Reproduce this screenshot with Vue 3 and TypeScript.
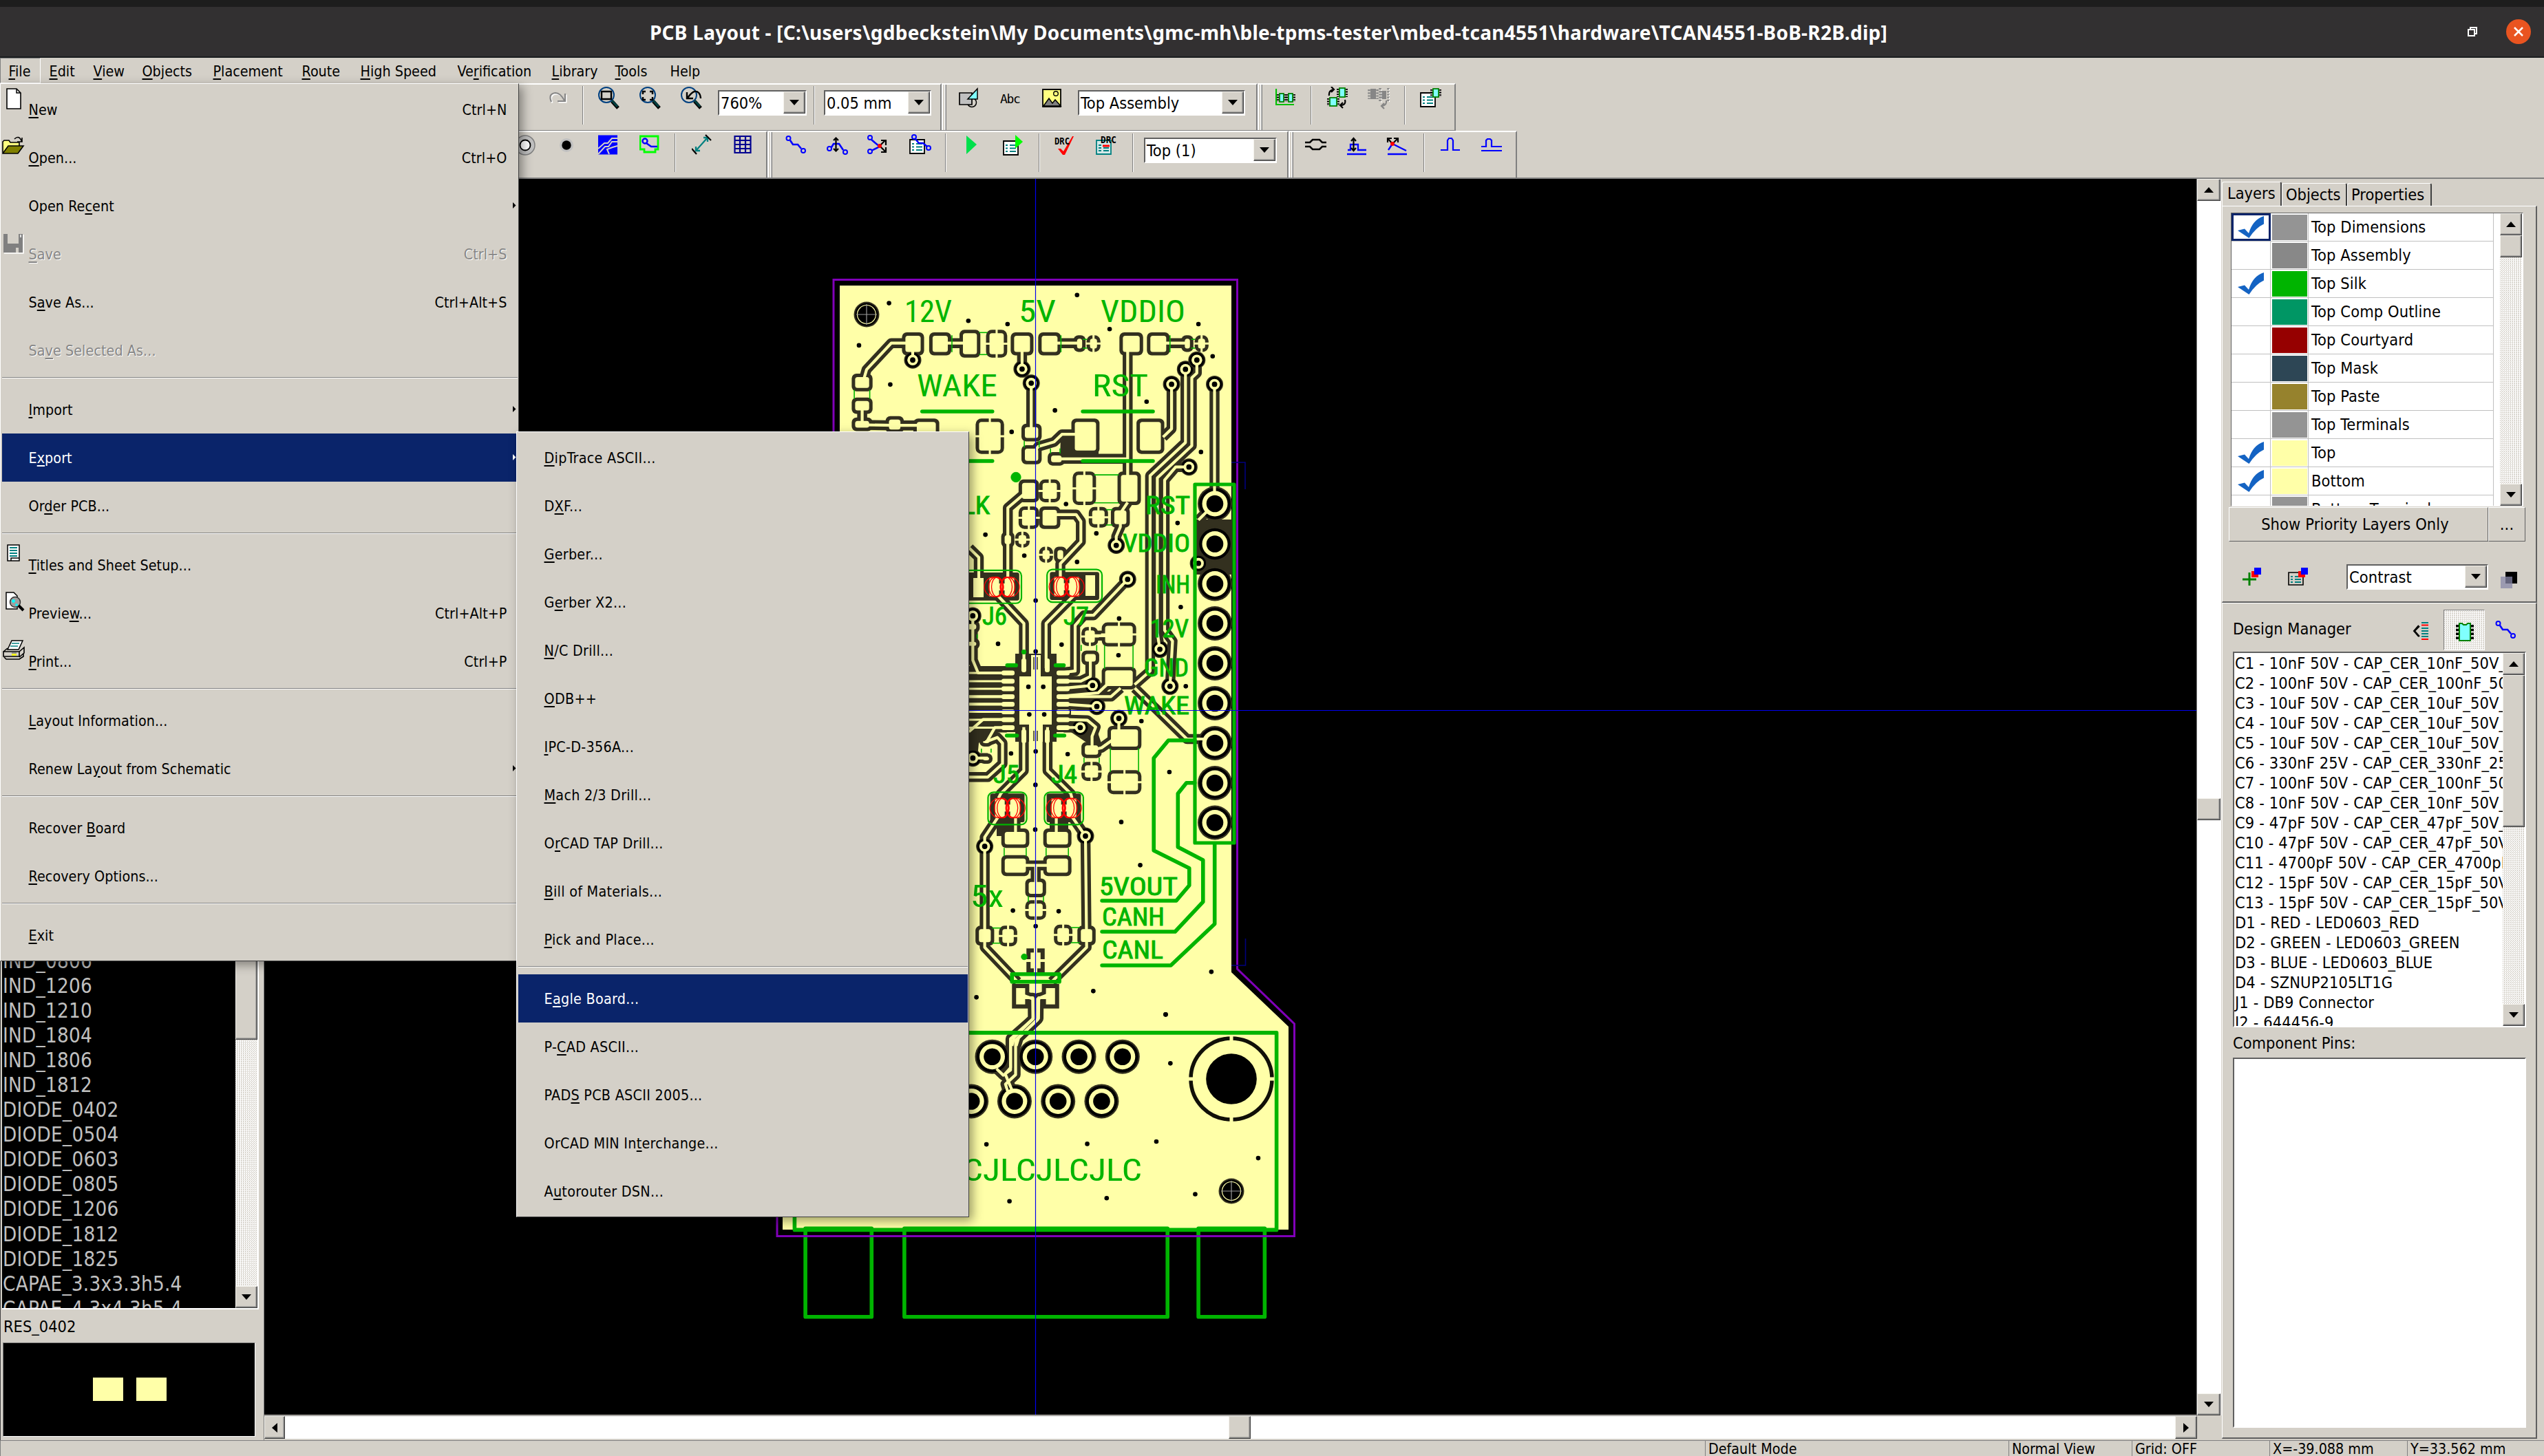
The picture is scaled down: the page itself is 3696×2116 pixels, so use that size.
<script setup lang="ts">
type MenuItem = { label?: string; keys?: string; sub?: boolean; off?: boolean; on?: boolean; icon?: string }
type Tool = { x: number; icon?: string; sep?: boolean; combo?: string; w?: number }
type Group = { from: number; to: number; tools: Tool[] }
type Grid = (s: string) => number[][]

const menuBar = [
  { t: '&File', w: 59 }, { t: '&Edit', w: 64 }, { t: '&View', w: 71 }, { t: '&Objects', w: 103 }, { t: '&Placement', w: 129 },
  { t: '&Route', w: 85 }, { t: '&High Speed', w: 141 }, { t: 'Ve&rification', w: 137 }, { t: '&Library', w: 92 }, { t: '&Tools', w: 80 }, { t: 'Help', w: 70 },
]

const fileMenu: MenuItem[] = [
  { label: '&New', keys: 'Ctrl+N', icon: 'new' }, { label: '&Open...', keys: 'Ctrl+O', icon: 'open' }, { label: 'Open Re&cent', sub: true },
  { label: '&Save', keys: 'Ctrl+S', off: true, icon: 'save' }, { label: 'S&ave As...', keys: 'Ctrl+Alt+S' }, { label: 'Sa&ve Selected As...', off: true }, {},
  { label: '&Import', sub: true }, { label: 'E&xport', sub: true, on: true }, { label: 'Or&der PCB...' }, {},
  { label: '&Titles and Sheet Setup...', icon: 'titles' }, { label: 'Previe&w...', keys: 'Ctrl+Alt+P', icon: 'preview' }, { label: '&Print...', keys: 'Ctrl+P', icon: 'print' }, {},
  { label: '&Layout Information...' }, { label: 'Renew La&yout from Schematic', sub: true }, {},
  { label: 'Recover &Board' }, { label: '&Recovery Options...' }, {}, { label: '&Exit' },
]

const exportMenu: MenuItem[] = [
  { label: '&DipTrace ASCII...' }, { label: 'D&XF...' }, { label: '&Gerber...' }, { label: 'G&erber X2...' }, { label: '&N/C Drill...' },
  { label: '&ODB++' }, { label: '&IPC-D-356A...' }, { label: '&Mach 2/3 Drill...' }, { label: 'O&rCAD TAP Drill...' }, { label: '&Bill of Materials...' },
  { label: '&Pick and Place...' }, {}, { label: 'E&agle Board...', on: true }, { label: 'P-&CAD ASCII...' }, { label: 'PAD&S PCB ASCII 2005...' },
  { label: 'OrCAD MIN In&terchange...' }, { label: 'A&utorouter DSN...' },
]

/* Splits "E&xport" into text before, the accelerator letter, and text after. */
function parts(s: string): string[] {
  const i = s.indexOf('&')
  return i < 0 ? [s, '', ''] : [s.slice(0, i), s[i + 1], s.slice(i + 2)]
}

const glass = '<ellipse cx="13" cy="12" rx="11" ry="11" fill="none" stroke="#004080" stroke-width="2"/><path d="M21 21L30 31" stroke="#000" stroke-width="5"/><path d="M21 20L29 29" stroke="#004040" stroke-width="3"/>'
const sheet = (x: number, y: number, c = '#000') => `<path d="M${x} ${y}h21v20h-21z" fill="#fff" stroke="${c}" stroke-width="1.8"/><path d="M${x + 3} ${y + 6}h3m3 0h9M${x + 3} ${y + 10.5}h3m3 0h9M${x + 3} ${y + 15}h3m3 0h9" stroke="#008080" stroke-width="1.8"/>`
const chip = (x: number, y: number, w = 8, h = 13) => `<path d="M${x - 2.5} ${y + 1}v${h - 1}M${x + w + 2.5} ${y + 1}v${h - 1}" stroke="#000" stroke-width="3" stroke-dasharray="1.8 1.8"/><rect x="${x}" y="${y}" width="${w}" height="${h}" fill="#80ffff" stroke="#008000" stroke-width="1.8"/>`

const icons: Record<string, string> = {
  new: '<path d="M7 1h14l6 6v23H7z" fill="#fff" stroke="#000" stroke-width="1.6"/><path d="M21 1v6h6" fill="none" stroke="#000" stroke-width="1.5"/>',
  open: '<path d="M1 24V8l2-2h7l2 3h13v5" fill="#ffff80" stroke="#000" stroke-width="1.6"/><path d="M1 25L9 14h22l-8 11z" fill="#808000" stroke="#000" stroke-width="1.6"/><path d="M18 4q6-6 10 2v2m-6 0h7v-6" fill="none" stroke="#000" stroke-width="1.6"/>',
  save: '<path d="M2 2h28v27H2z" fill="#808080"/><path d="M8 2h16v14H8z" fill="#d4d0c8"/><path d="M20 22h4v7h-4z" fill="#d4d0c8"/><path d="M27 3v4M3 30h28V3" stroke="#fff" stroke-width="1.5" fill="none"/>',
  titles: '<path d="M8 2h17v23H8z" fill="#fff" stroke="#000" stroke-width="1.5"/><path d="M11 6h11M11 10h11M11 14h11M11 18h11" stroke="#008080" stroke-width="2"/><path d="M13 25v-4h12" fill="none" stroke="#000" stroke-width="1.5"/>',
  preview: '<path d="M6 1h11l5 5v19H6z" fill="#fff" stroke="#000" stroke-width="1.5"/><circle cx="19" cy="15" r="7.5" fill="#a0a0a0" stroke="#333" stroke-width="1.5"/><circle cx="16.5" cy="13.5" r="2.4" fill="#0ff"/><circle cx="21" cy="19" r="1.8" fill="#0ff"/><path d="M24 20l7 7" stroke="#000" stroke-width="4"/>',
  print: '<path d="M8 14L14 1h16l-6 13z" fill="#fff" stroke="#000" stroke-width="1.5"/><path d="M14 5h11M12 9h11" stroke="#008080" stroke-width="1.6"/><path d="M2 17l6-5M2 17h23v7H2zM25 17l7-6v8l-7 6" fill="#d4d0c8" stroke="#000" stroke-width="1.6"/><path d="M3 25l3 3h19l6-4v-4" fill="none" stroke="#000" stroke-width="1.6"/><path d="M14 21.5h7" stroke="#ff0" stroke-width="2.4"/><path d="M14 19h7" stroke="#808080" stroke-width="1.5"/>',
  redo: '<path d="M4 22Q-1 10 10 9q7 0 13 11M13 21h11V10" fill="none" stroke="#fff" stroke-width="2.2" transform="translate(1.5 1.5)"/><path d="M4 22Q-1 10 10 9q7 0 13 11M13 21h11V10" fill="none" stroke="#868686" stroke-width="2.2"/>',
  zoomRect: glass + '<path d="M6 7h14v11H6z" fill="none" stroke="#000" stroke-width="2.4"/>',
  zoomAll: glass + '<path d="M6 11V7h4m6 0h4v4m0 4v4h-4m-6 0H6v-4" fill="none" stroke="#000" stroke-width="2.4"/>',
  zoomPrev: glass + '<path d="M30 17q-1-11-9-10-4 1-10 9M10 8v9h9" fill="none" stroke="#000" stroke-width="2.4"/>',
  shapes: '<circle cx="19" cy="23" r="6.5" fill="#d4d0c8" stroke="#000" stroke-width="1.5"/><path d="M1 9h18v17H1z" fill="#c0c0c0" stroke="#000" stroke-width="1.7"/><path d="M27 3v15H13z" fill="#80ffff" stroke="#000" stroke-width="1.5"/>',
  image: '<path d="M1 4h26v25H1z" fill="#ffff80" stroke="#000" stroke-width="1.8"/><path d="M2 28l8-11 5 7 4-5 8 9z" fill="#808080" stroke="#000" stroke-width="1.5"/><circle cx="20" cy="10" r="3.3" fill="none" stroke="#000" stroke-width="1.4"/>',
  align: '<path d="M1 3v23h26" fill="none" stroke="#00c000" stroke-width="2.2"/>' + chip(6, 10, 6, 12) + chip(19, 10, 6, 12),
  swap: chip(18, 2, 8, 13) + chip(4, 16, 10, 12) + '<path d="M3 13q-1-8 7-9m-4-4l4 4-4 4M26 19q2 8-7 8m4-4l-4 4 4 4" fill="none" stroke="#000" stroke-width="2.2"/>',
  swapOff: '<path d="M4 3h8v15H4zM19 6h8v12h-8z" fill="#868686"/><path d="M2 4v14M14 4v14M18 2v20M30 2v20" stroke="#868686" stroke-width="3.5" stroke-dasharray="2.2 2"/><path d="M31.500 3v20M20 4v20" stroke="#fff" stroke-width="1.2" stroke-dasharray="2.2 2"/><path d="M27 20q1 7-6 8m3-4l-4 4 4 4" fill="none" stroke="#868686" stroke-width="2.2"/>',
  compList: sheet(1, 9) + chip(19, 3, 8, 12),
  pad: '<circle cx="14" cy="16" r="14" fill="#c0c0c0" stroke="#808080" stroke-width="1.5"/><circle cx="14" cy="16" r="7.5" fill="#fff" stroke="#000" stroke-width="1.8"/>',
  dot: '<circle cx="12" cy="16" r="10" fill="#c0c0c0"/><circle cx="12" cy="16" r="6.7"/>',
  routes: '<path d="M0 1.500h28v28H0z" fill="#00f"/><path d="M0 21l9-8h5l6-7h8M0 29l10-11h5l5-7h8M16 29l-3-7 8-3 7-2" fill="none" stroke="#d4d0c8" stroke-width="2"/>',
  area: '<path d="M1 3h26v19h-4v4H7v-4H1z" fill="#d4d0c8" stroke="#0f0" stroke-width="2.8"/><circle cx="8" cy="10" r="3.5" fill="none" stroke="#00f" stroke-width="2.4"/><path d="M10 13l7 5h9" fill="none" stroke="#00f" stroke-width="2.6"/>',
  measure: '<path d="M6 24L22 6M6 18v6h6M17 5h6v6" fill="none" stroke="#008080" stroke-width="2.3"/><path d="M0 21l7 8M20 1l8 8" stroke="#000" stroke-width="2.2"/>',
  table: '<path d="M1.500 3h23v24h-23zM1.500 9h23M1.500 15h23M1.500 21h23M9 3v24M17 3v24" fill="none" stroke="#000090" stroke-width="2.2"/>',
  track: '<path d="M7 9l4 6h7l5 6" fill="none" stroke="#00f" stroke-width="2.6"/><circle cx="4.5" cy="6" r="3" fill="none" stroke="#00f" stroke-width="2"/><circle cx="26" cy="24" r="3" fill="none" stroke="#00f" stroke-width="2"/>',
  trackMove: '<path d="M7 19l3-5h8l6 9" fill="none" stroke="#00f" stroke-width="2.6"/><circle cx="4" cy="21" r="3" fill="none" stroke="#00f" stroke-width="2"/><circle cx="27" cy="26" r="3" fill="none" stroke="#00f" stroke-width="2"/><path d="M13.5 6v18M10 9l3.5-3.5L17 9M10 21l3.5 3.5L17 21" fill="none" stroke="#000" stroke-width="2.2"/>',
  trackFree: '<path d="M6 8l12 10L6 24" fill="none" stroke="#00f" stroke-width="2.5"/><circle cx="4" cy="5" r="3" fill="none" stroke="#00f" stroke-width="2"/><circle cx="4" cy="25" r="3" fill="none" stroke="#00f" stroke-width="2"/><path d="M18 17l8-8m-6 0h7v7M18 17l8 8m-6 1h7v-7" fill="none" stroke="#000" stroke-width="2.2"/><circle cx="18" cy="17" r="3" fill="red"/>',
  netList: sheet(1, 8) + '<path d="M8 6l6 7h6l6 5" fill="none" stroke="#00f" stroke-width="2.5"/><circle cx="7" cy="4" r="3" fill="none" stroke="#00f" stroke-width="2"/><circle cx="28" cy="20" r="3" fill="none" stroke="#00f" stroke-width="2"/>',
  play: '<path d="M0 2l15 13L0 29z" fill="#00e04c"/>',
  playList: sheet(1, 10) + '<path d="M18 1l11 10-11 10z" fill="#0f0"/>',
  drc: '<path d="M5 21h4l4 4L26 3h2L15 30h-3z" fill="red"/><text x="0" y="15" font-family="DejaVu Sans Mono" font-size="14" font-weight="bold" textLength="22" lengthAdjust="spacingAndGlyphs">DRC</text>',
  drcList: '<path d="M1 9h21v20H1z" fill="#d4e8e8" stroke="#008080" stroke-width="1.8"/><path d="M4 16h4M4 20h4m3 0h8M4 24h4m3 0h8" stroke="#008080" stroke-width="1.8"/><path d="M10 17h10" stroke="red" stroke-width="3"/><text x="7" y="13" font-family="DejaVu Sans Mono" font-size="14" font-weight="bold" textLength="23" lengthAdjust="spacingAndGlyphs">DRC</text>',
  pair: '<path d="M0 12h7l4-4h10l4 4h6M0 18h7l4 4h10l4-4h6" fill="none" stroke="#000" stroke-width="2.5"/>',
  pairMove: '<path d="M1 23h4v-8h11v8h12M0 29h28" fill="none" stroke="#00f" stroke-width="2.3"/><path d="M9.5 7v16M6 10l3.5-4L13 10M6 20l3.5 4 3.5-4" fill="none" stroke="#000" stroke-width="2.2"/>',
  pairFree: '<path d="M3 23l6-9 8 4 12 6M2 29h28" fill="none" stroke="#00f" stroke-width="2.3"/><path d="M9 14L2 6m0 6V6h6M9 14l8-8m-6 0h6v6" fill="none" stroke="#000" stroke-width="2.2"/><circle cx="9" cy="14" r="3" fill="red"/>',
  pulse: '<path d="M0 23h10V9l2-3h4l2 3v14h10" fill="none" stroke="#00f" stroke-width="2.2"/>',
  pulsePair: '<path d="M0 18h7V9l2-2h4l2 2v9h15M0 24h30" fill="none" stroke="#00f" stroke-width="2.2"/>',
  addLayer: '<path d="M12 17v19M2 27h20" stroke="#008000" stroke-width="3"/><path d="M15 15h10v9H15z" fill="red"/><path d="M19 10h10v10H19z" fill="#00f"/>',
  layerList: '<path d="M1 17h21v18H1z" fill="#d4d0c8" stroke="#000" stroke-width="1.6"/><path d="M4 23h3m3 0h9M4 27h3m3 0h9M4 31h3m3 0h9" stroke="#008080" stroke-width="1.8"/><path d="M15 15h10v9H15z" fill="red"/><path d="M19 10h10v10H19z" fill="#00f"/>',
  contrast: '<path d="M8 4h17v17H8z"/><path d="M1 11h17v17H1z" fill="#8888a8" opacity=".75"/>',
  sortList: '<path d="M9 6L2 14l7 8M3 14l7-7M3 14l7 8" fill="none" stroke="#000" stroke-width="2"/><path d="M13 2h10M13 10h10M13 14h10M13 18h10M13 22h10" stroke="#008080" stroke-width="1.8"/><path d="M13 5.5h10M13 26h10" stroke="red" stroke-width="1.8"/>',
  bigChip: '<path d="M2 4v22M24 4v22" stroke="#000" stroke-width="4" stroke-dasharray="3.5 2.3"/><path d="M5 2h4l2 2h4l2-2h4v25H5z" fill="#80ffff" stroke="#008000" stroke-width="2"/>',
}

const rows: Group[][] = [
  [
    { from: 0, to: 1368, tools: [{ x: 797, icon: 'redo' }, { x: 846, sep: true }, { x: 868, icon: 'zoomRect' }, { x: 928, icon: 'zoomAll' }, { x: 988, icon: 'zoomPrev' }, { x: 1043, combo: '760%', w: 129 }, { x: 1182, sep: true }, { x: 1197, combo: '0.05 mm', w: 156 }] },
    { from: 1368, to: 1827, tools: [{ x: 1393, icon: 'shapes' }, { x: 1453, icon: 'abc' }, { x: 1514, icon: 'image' }, { x: 1566, combo: 'Top Assembly', w: 243 }] },
    { from: 1827, to: 2115, tools: [{ x: 1853, icon: 'align' }, { x: 1904, sep: true }, { x: 1928, icon: 'swap' }, { x: 1987, icon: 'swapOff' }, { x: 2040, sep: true }, { x: 2063, icon: 'compList' }] },
  ],
  [
    { from: 0, to: 1115, tools: [{ x: 749, icon: 'pad' }, { x: 811, icon: 'dot' }, { x: 869, icon: 'routes' }, { x: 929, icon: 'area' }, { x: 980, sep: true }, { x: 1005, icon: 'measure' }, { x: 1066, icon: 'table' }] },
    { from: 1115, to: 1872, tools: [{ x: 1141, icon: 'track' }, { x: 1201, icon: 'trackMove' }, { x: 1260, icon: 'trackFree' }, { x: 1321, icon: 'netList' }, { x: 1373, sep: true }, { x: 1404, icon: 'play' }, { x: 1457, icon: 'playList' }, { x: 1509, sep: true }, { x: 1532, icon: 'drc' }, { x: 1592, icon: 'drcList' }, { x: 1645, sep: true }, { x: 1662, combo: 'Top (1)', w: 193 }] },
    { from: 1872, to: 2204, tools: [{ x: 1896, icon: 'pair' }, { x: 1957, icon: 'pairMove' }, { x: 2014, icon: 'pairFree' }, { x: 2068, sep: true }, { x: 2093, icon: 'pulse' }, { x: 2152, icon: 'pulsePair' }] },
  ],
]
const toolWidth = (t: Tool) => t.w ?? (t.sep ? 2 : 34)
function toolGap(g: Group, i: number): string {
  const prev = i ? g.tools[i - 1].x + toolWidth(g.tools[i - 1]) : g.from
  return `${g.tools[i].x - prev}px`
}

const patterns = ['IND_0806', 'IND_1206', 'IND_1210', 'IND_1804', 'IND_1806', 'IND_1812', 'DIODE_0402', 'DIODE_0504', 'DIODE_0603', 'DIODE_0805', 'DIODE_1206', 'DIODE_1812', 'DIODE_1825', 'CAPAE_3.3x3.3h5.4', 'CAPAE_4.3x4.3h5.4']

const layers = [
  ['Top Dimensions', '#949494', 1], ['Top Assembly', '#888888', 0], ['Top Silk', '#00b400', 1], ['Top Comp Outline', '#009664', 0], ['Top Courtyard', '#960000', 0],
  ['Top Mask', '#2d4655', 0], ['Top Paste', '#96822d', 0], ['Top Terminals', '#949494', 0], ['Top', '#ffffa8', 1], ['Bottom', '#ffffa8', 1], ['Bottom Terminals', '#949494', 0],
] as [string, string, number][]

const components = [
  'C1 - 10nF 50V - CAP_CER_10nF_50V_', 'C2 - 100nF 50V - CAP_CER_100nF_50', 'C3 - 10uF 50V - CAP_CER_10uF_50V_', 'C4 - 10uF 50V - CAP_CER_10uF_50V_',
  'C5 - 10uF 50V - CAP_CER_10uF_50V_', 'C6 - 330nF 25V - CAP_CER_330nF_25', 'C7 - 100nF 50V - CAP_CER_100nF_50', 'C8 - 10nF 50V - CAP_CER_10nF_50V_',
  'C9 - 47pF 50V - CAP_CER_47pF_50V_', 'C10 - 47pF 50V - CAP_CER_47pF_50V', 'C11 - 4700pF 50V - CAP_CER_4700pF', 'C12 - 15pF 50V - CAP_CER_15pF_50V', 'C13 - 15pF 50V - CAP_CER_15pF_50V',
  'D1 - RED - LED0603_RED', 'D2 - GREEN - LED0603_GREEN', 'D3 - BLUE - LED0603_BLUE', 'D4 - SZNUP2105LT1G', 'J1 - DB9 Connector', 'J2 - 644456-9',
]

/* The board is drafted on three grids: upper half, lower half, connector. */
const grid = (ox: number, oy: number, sx: number, sy: number): Grid => (s) =>
  s.trim().split(/\s+/).map((p) => { const [x, y] = p.split(',').map(Number); return [ox + x / sx, oy + y / sy] })
const up = grid(1180, 390, 2.1778, 2.529)
const lo = grid(1380, 1000, 2.9037, 3)
const cn = grid(1100, 1400, 1.9122, 2.9037)
const line = (g: Grid, s: string) => 'M' + g(s).map((p) => p.map((v) => v.toFixed(1)).join(' ')).join('L')
const lines = (g: Grid, list: string[]) => list.map((s) => line(g, s))

const traces = [
  ...lines(up, [
    '310,275 250,275 172,372 160,420', '420,275 500,275', '750,275 845,275', '1095,275 1190,275', '318,290 318,337', '664,290 664,370', '693,422 693,600', '998,290 998,810',
    '158,500 158,575 260,577 350,577', '693,690 715,655 765,638 790,610 850,610', '770,700 998,700', '1137,426 1137,590 1110,620',
    '1181,371 1181,640 1069,762 1069,1480 1020,1530', '1217,337 1217,385 1201,402 1201,652 1092,770 1092,1340 1100,1400', '1192,730 1150,730 1115,778 1115,1330 1140,1370 1132,1536',
    '1273,426 1273,865', '998,860 975,900 975,950 962,985 962,1018', '750,905 835,905 850,930 850,1005 785,1085 785,1140', '680,820 619,880 619,1140', '497,1028 527,1062 527,1140',
    '585,1200 670,1305 670,1470', '830,1200 740,1305 740,1470', '998,1143 890,1275 860,1275 832,1312 832,1480 780,1487', '880,1350 970,1350', '880,1430 880,1500 850,1517 780,1517', '887,1533 780,1545',
    '508,1277 508,1440 525,1487 600,1487', '960,1500 905,1560 780,1573', '1274,865 1222,925',
  ]),
  ...lines(lo, [
    '312,170 312,360 215,460 205,480', '412,170 412,360 510,460 515,480', '205,560 147,650 147,1130 285,1280', '515,560 572,645 577,1130 430,1280', '277,560 277,650', '449,560 449,650',
    '275,773 455,773', '362,773 362,870', '480,37 680,37 720,0', '480,70 620,80', '480,172 550,172', '480,137 580,140 615,170 600,210 600,270', '600,270 640,260 735,190', '713,132 713,200',
    '780,0 1000,222 1118,222', '80,70 240,70', '80,37 240,37', '80,190 140,137 240,137', '155,235 190,172 240,172', '97,305 160,305', '80,388 160,388 222,330 222,240 200,215 150,235',
    '300,1350 350,1350 352,1440 270,1525 262,1560', '425,1350 375,1350 374,1440 290,1525 280,1560',
  ]),
  ...lines(cn, ['730,130 766,150 766,235 704,318 704,440 690,465', '812,130 779,150 779,238 718,325 718,470 690,510 700,560', '704,318 704,450 684,472 665,445', '690,470 715,560']),
]

const box = (g: Grid, s: string) => { const [[a, b], [c, d]] = g(s); return { x: a, y: b, w: c - a, h: d - b } }
const pads = [
  ...['284,235 354,320', '370,235 440,320', '466,226 532,328', '628,235 700,320', '715,235 787,320', '827,246 865,307', '972,235 1047,320', '1059,235 1131,320', '1168,246 1206,307',
    '125,387 191,452', '125,475 191,535', '125,548 191,598', '232,543 290,605', '320,552 402,640', '662,571 726,636', '662,650 726,720', '745,675 800,725', '820,552 909,682', '1026,552 1114,682',
    '945,877 1005,953', '966,747 1040,870', '653,776 718,860', '718,875 785,958', '598,968 640,1026', '765,1023 805,1082', '852,1405 908,1458', '916,1465 1025,1548', '480,1295 530,1340', '480,1360 530,1400'].map((s) => box(up, s)),
  ...['217,612 335,697', '394,612 513,697', '217,728 335,820', '394,728 513,820', '318,830 406,912', '108,1036 187,1123', '538,1036 615,1122', '555,235 640,305', '665,165 808,270', '125,215 180,255', '125,285 180,330'].map((s) => box(lo, s)),
]
const thermals = [
  ...['550,226 617,328', '868,246 912,307', '1210,246 1254,307', '517,552 607,682', '824,747 898,870', '875,877 936,953', '718,776 785,860', '653,875 718,958', '642,968 688,1026', '718,1023 762,1082', '852,1318 905,1388', '916,1301 1025,1390'].map((s) => box(up, s)),
  ...['318,925 406,1010', '207,1036 284,1126', '439,1031 517,1122', '555,322 640,405', '665,358 808,463'].map((s) => box(lo, s)),
]
const squares = ['262,1290 335,1397', '388,1290 461,1397', '323,1135 400,1240'].map((s) => box(lo, s))
const vias = [
  ...up('318,337 664,370 693,422 1137,426 1181,371 1217,337 1273,426 1192,730 962,1018 1222,1084 998,1143 508,1277 1100,1400 1132,1536 887,1533'),
  ...lo('620,80 550,172 713,132 97,305 147,690 572,645'),
]
const pins = [...[732, 790.5, 848.5, 906, 964, 1022, 1080, 1138, 1195.5].map((y) => [1765, y]), ...cn('653,394 773,394 894,394 1015,394 595,582 715,582 836,582 957,582')]
const drills = [
  ...up('243,128 494,193 618,205 838,98 941,223 1222,205 1267,323 148,283 247,427 768,522 1058,490 631,601 1230,675 1156,936 548,979 803,866 899,974 671,1056 838,1079 707,1221 588,1380 789,1383 707,1408 1166,1245 971,1287 969,1422 1182,1536 684,1538 731,1538'),
  ...lo('335,115 398,115 808,144 258,285 362,276 497,288 926,366 361,422 360,617 723,584 803,772 266,970 459,973 362,1038 1103,1237 605,1321 910,1423 112,1348'),
  ...cn('1135,216 1148,422 637,764 917,762 1109,752 1392,822 701,1004 971,991 1217,974'),
]
const fiducials = [[1259, 457], [1789, 1731]]
const silk = [
  ...lines(up, ['348,526 570,526', '856,526 1078,526', '490,708 570,708', '856,708 1078,708', '617,1459 645,1459', '770,1459 796,1459']),
  ...lines(lo, ['1033,228 922,228 860,305 860,708 1010,785 1010,860 955,927 642,927', '1033,413 998,413 962,460 962,693 1068,750 1068,932 950,1062 642,1062', '1117,680 1117,1028 932,1209 642,1209', '262,1247 462,1247 462,1280 262,1280 262,1247', '240,207 283,207', '444,207 483,207']),
  ...lines(cn, ['104,293 1443,293 1443,1125 104,1125 104,293', '134,1119 318,1119 318,1492 134,1492 134,1119', '409,1119 1140,1119 1140,1492 409,1492 409,1119', '1226,1119 1410,1119 1410,1492 1226,1492 1226,1119']),
]
const fineSilk = [
  ...lines(up, ['442,246 442,308', '528,236 554,236', '528,317 554,317', '787,246 787,308', '1132,246 1132,308', '856,261 870,261', '856,293 870,293', '1199,261 1212,261', '1199,293 1212,293', '133,446 133,480', '182,446 182,480', '671,634 671,658', '718,634 718,658', '754,662 754,680', '784,662 784,680', '892,759 970,759', '892,862 970,862', '930,887 950,887', '930,943 950,943', '925,1384 925,1472', '1015,1384 1015,1472', '851,1384 851,1406', '900,1384 900,1406', '522,1345 522,1360']),
  ...lines(lo, ['229,697 229,733', '322,697 322,733', '406,697 406,733', '500,697 500,733', '331,907 331,932', '395,907 395,932', '178,1046 215,1046', '178,1112 215,1112', '510,1044 548,1044', '510,1110 548,1110', '566,303 566,326', '630,303 630,326', '677,262 677,365', '796,262 796,365', '133,264 133,281', '174,264 174,281']),
]
const jumpers = [
  { dark: box(up, '470,1118 655,1221'), ring: box(up, '470,1110 662,1231'), c: up('600,1171')[0] },
  { dark: box(up, '752,1116 908,1219'), ring: box(up, '743,1107 917,1227'), c: up('805,1170')[0] },
  { dark: box(lo, '170,460 315,585'), ring: box(lo, '161,454 324,595'), c: lo('243,523')[0] },
  { dark: box(lo, '408,460 553,585'), ring: box(lo, '399,454 563,595'), c: lo('481,523')[0] },
]
/* Each end of a jumper is a set of nested arcs sharing the pad's height. */
const coil = [{ o: -11.5, r: 14 }, { o: -9, r: 10 }, { o: -6.500, r: 8.500 }, { o: 11.5, r: 14 }, { o: 9, r: 10 }, { o: 6.500, r: 8.500 }]
const chipRows = [978, 990, 1001, 1012.5, 1023.5, 1034.5, 1046, 1057.5]

const labels = [
  ['12V', 1314, 468, 69, 45], ['5V', 1480, 468, 54, 45], ['VDDIO', 1599, 468, 123, 45], ['WAKE', 1332, 576, 117, 45], ['RST', 1587, 576, 81, 45], ['CLK', 1376, 747, 62, 36],
  ['RST', 1664, 747, 65, 37], ['VDDIO', 1631, 802, 98, 37], ['INH', 1679, 862, 50, 37], ['12V', 1671, 926, 56, 37], ['GND', 1662, 983, 65, 37], ['WAKE', 1633, 1038, 95, 37],
  ['J6', 1427, 908, 36, 37], ['J7', 1545, 908, 37, 37], ['J5', 1443, 1138, 38, 37], ['J4', 1527, 1138, 38, 37], ['5x', 1410, 1318, 48, 45],
  ['5VOUT', 1597, 1301, 114, 37], ['CANH', 1601, 1345, 91, 37], ['CANL', 1601, 1393, 89, 37], ['JLCJLCJLCJLC', 1351, 1716, 308, 45],
] as [string, number, number, number, number][]
</script>

<template>
  <div class="window">
    <header class="title">
      <span class="name">PCB Layout - [C:\users\gdbeckstein\My Documents\gmc-mh\ble-tpms-tester\mbed-tcan4551\hardware\TCAN4551-BoB-R2B.dip]</span>
      <svg class="controls" viewBox="0 0 110 72">
        <path d="M3 33h9v9H3z M6 33v-3h9v9h-3" fill="none" stroke="#fff" stroke-width="2" />
        <circle cx="76" cy="36" r="18" fill="#e95420" />
        <path d="M70 30l12 12M82 30l-12 12" stroke="#fff" stroke-width="2.5" />
      </svg>
    </header>

    <nav class="menubar">
      <span v-for="(m, i) in menuBar" :key="m.t" :class="{ open: i === 0 }" :style="{ width: m.w + 'px' }">{{ parts(m.t)[0] }}<u>{{ parts(m.t)[1] }}</u>{{ parts(m.t)[2] }}</span>
    </nav>

    <div class="toolbars">
      <div v-for="(row, r) in rows" :key="r" class="toolrow">
        <div v-for="g in row" :key="g.from" class="group" :style="{ width: g.to - g.from + 'px' }">
          <template v-for="(t, i) in g.tools" :key="t.x">
            <i v-if="t.sep" class="sep" :style="{ marginLeft: toolGap(g, i) }" />
            <div v-else-if="t.combo" class="combo" :style="{ marginLeft: toolGap(g, i), width: t.w + 'px' }">
              <span>{{ t.combo }}</span><b class="btn down" />
            </div>
            <span v-else-if="t.icon === 'abc'" class="abc" :style="{ marginLeft: toolGap(g, i) }">Abc</span>
            <svg v-else class="tool" viewBox="0 0 34 34" :style="{ marginLeft: toolGap(g, i) }" v-html="icons[t.icon!]" />
          </template>
        </div>
      </div>
    </div>

    <main>
      <aside class="left">
        <div class="patterns">
          <div class="names"><div v-for="p in patterns" :key="p">{{ p }}</div></div>
          <div class="vbar dither"><b class="btn lthumb" /><b class="btn down end" /></div>
        </div>
        <div class="patname">RES_0402</div>
        <div class="patview"><i /><i /></div>
      </aside>

      <section class="work">
        <div class="upper">
          <svg class="board" viewBox="384 260 2807 1796">
            <path d="M1220 415H1789V1413L1872 1492V1787H1137V1400L1220 1320Z" fill="#ffffa8" />
            <g fill="none" stroke="#33301f" stroke-width="14.5" stroke-linejoin="round">
              <path v-for="t in traces" :key="t" :d="t" />
            </g>
            <g fill="#33301f">
              <path d="M1408 968H1545L1556 978V1058L1590 1050 1600 1080H1580L1556 1064H1408Z" />
              <path d="M1475 950H1535V1078H1475Z" />
              <path d="M1400 1010H1430L1436 1064 1422 1080 1420 1100H1400Z" />
              <path d="M1541 635H1561V655H1596V665H1540Z" />
              <path d="M1738 755H1790V835H1738Z" />
              <path d="M1448 1195H1480V1215H1448ZM1525 1195H1552V1215H1525Z" />
              <rect v-for="(p, i) in pads" :key="i" :x="p.x" :y="p.y" :width="p.w" :height="p.h" rx="7" />
              <rect v-for="(p, i) in squares" :key="'s' + i" :x="p.x" :y="p.y" :width="p.w" :height="p.h" />
            </g>
            <g v-for="(p, i) in thermals" :key="'t' + i">
              <rect :x="p.x + 2.5" :y="p.y + 2.5" :width="p.w - 5" :height="p.h - 5" rx="6" fill="#ffffa8" stroke="#33301f" stroke-width="5" />
              <path :d="`M${p.x + p.w / 2} ${p.y - 1}v${p.h + 2}M${p.x - 1} ${p.y + p.h / 2}h${p.w + 2}`" stroke="#ffffa8" stroke-width="3" />
            </g>
            <g v-for="(v, i) in vias" :key="'v' + i">
              <circle :cx="v[0]" :cy="v[1]" r="12.5" fill="#33301f" />
              <circle :cx="v[0]" :cy="v[1]" r="11" />
            </g>
            <g v-for="(v, i) in pins" :key="'p' + i">
              <circle :cx="v[0]" :cy="v[1]" r="25" fill="#33301f" />
              <circle :cx="v[0]" :cy="v[1]" r="22.8" />
            </g>
            <rect v-for="(j, i) in jumpers" :key="'j' + i" :x="j.dark.x" :y="j.dark.y" :width="j.dark.w" :height="j.dark.h" rx="3" fill="#33301f" />
            <g fill="none" stroke="#ffffa8" stroke-width="4.2" stroke-linejoin="round">
              <path v-for="t in traces" :key="t" :d="t" />
              <path v-for="y in chipRows" :key="y" :d="`M1408 ${y}H1460`" stroke-width="3.2" />
            </g>
            <g fill="#ffffa8">
              <rect v-for="(p, i) in pads" :key="i" :x="p.x + 5" :y="p.y + 5" :width="p.w - 10" :height="p.h - 10" rx="3.5" />
              <rect v-for="(p, i) in squares" :key="'s' + i" :x="p.x + 6" :y="p.y + 6" :width="p.w - 12" :height="p.h - 12" />
              <path d="M1502 1375V1418H1507V1375ZM1488 1394V1398H1520V1394Z" />
              <circle v-for="(v, i) in vias" :key="'v' + i" :cx="v[0]" :cy="v[1]" r="7.8" />
              <circle v-for="(v, i) in pins" :key="'p' + i" :cx="v[0]" :cy="v[1]" r="18.5" />
              <path d="M1481 983H1528V1053H1515V1078H1495V1053H1481ZM1498 952H1512V990H1498Z" />
              <template v-for="y in chipRows" :key="y">
                <rect x="1455" :y="y - 3.5" width="19" height="7" rx="3" />
                <rect x="1535" :y="y - 3.5" width="19" height="7" rx="3" />
              </template>
              <rect x="1484" y="957" width="7" height="20" rx="3" /><rect x="1518" y="957" width="7" height="20" rx="3" />
              <rect x="1484" y="1060" width="7" height="20" rx="3" /><rect x="1518" y="1060" width="7" height="20" rx="3" />
              <rect x="1414" y="840" width="15" height="28" /><rect x="1577" y="836" width="14" height="30" />
              <template v-for="(j, i) in jumpers" :key="i">
                <rect :x="j.c[0] - 18" :y="j.c[1] - 14" width="14" height="28" />
                <rect :x="j.c[0] + 4" :y="j.c[1] - 14" width="14" height="28" />
                <rect :x="j.c[0] - 5" :y="j.c[1] - 5" width="10" height="10" />
              </template>
            </g>
            <path d="M1502 955V973M1507 955V973M1502 1062V1077M1507 1062V1077" stroke="#33301f" stroke-width="1.5" />
            <circle v-for="(v, i) in vias" :key="'vh' + i" :cx="v[0]" :cy="v[1]" r="3.9" />
            <circle v-for="(v, i) in pins" :key="'ph' + i" :cx="v[0]" :cy="v[1]" r="12.3" />
            <circle v-for="(d, i) in drills" :key="'d' + i" :cx="d[0]" :cy="d[1]" r="3.3" />
            <circle cx="1789" cy="1568" r="59" fill="none" stroke="#111008" stroke-width="5.5" />
            <path d="M1789 1503V1633M1724 1568H1854" stroke="#ffffa8" stroke-width="5" />
            <circle cx="1789" cy="1568" r="36.8" />
            <g v-for="f in fiducials" :key="f[0]">
              <circle :cx="f[0]" :cy="f[1]" r="18.5" fill="#33301f" />
              <circle :cx="f[0]" :cy="f[1]" r="16.5" />
              <circle :cx="f[0]" :cy="f[1]" r="13.5" fill="none" stroke="#ffffa8" stroke-width="1.2" />
              <path :d="`M${f[0] - 15} ${f[1]}h30M${f[0]} ${f[1] - 15}v30`" stroke="#999" stroke-width="1.2" />
            </g>
            <g v-for="(j, i) in jumpers" :key="'c' + i" fill="none">
              <rect :x="j.ring.x" :y="j.ring.y" :width="j.ring.w" :height="j.ring.h" rx="8" stroke="#00b400" stroke-width="2.2" />
              <ellipse v-for="c in coil" :key="c.o" :cx="j.c[0] + c.o" :cy="j.c[1]" :rx="c.r" ry="14.3" stroke="red" stroke-width="1.3" />
            </g>
            <g fill="none" stroke="#00b400" stroke-linejoin="round" stroke-linecap="round">
              <path v-for="s in silk" :key="s" :d="s" stroke-width="5.6" />
              <path v-for="s in fineSilk" :key="s" :d="s" stroke-width="1.6" stroke-linecap="butt" />
              <rect x="1736" y="704" width="57" height="521" stroke-width="5.2" />
            </g>
            <g fill="#00b400" stroke="#00b400" stroke-width=".8">
              <circle cx="1476" cy="693.5" r="7.2" /><circle cx="1487.5" cy="947.5" r="3.2" /><circle cx="1488" cy="1390.5" r="4.3" />
              <text v-for="(l, i) in labels" :key="i" :x="l[1]" :y="l[2]" :textLength="l[3]" :font-size="l[4]" :stroke-width="l[4] < 40 ? 0.9 : 0.1" lengthAdjust="spacingAndGlyphs">{{ l[0] }}</text>
            </g>
            <path d="M1211 1320V406.500H1797.500V1408L1880.500 1488V1796.500H1129V1400Z" fill="none" stroke="#8000b8" stroke-width="3" />
            <path d="M1789 672H1809V711M1789 1403H1809.500V1364" fill="none" stroke="#00007c" stroke-width="1.6" />
            <path d="M1504.500 260V2056M384 1032.500H3191" stroke="#0000f0" stroke-width="1.2" />
          </svg>
          <div class="vbar canvas-v"><b class="btn up" /><b class="btn cthumb" /><b class="btn down end" /></div>
        </div>
        <div class="hbar"><b class="btn prev" /><b class="btn hthumb" /><b class="btn next" /></div>
      </section>

      <aside class="right">
        <div class="tabs"><span class="active">Layers</span><span>Objects</span><span>Properties</span></div>
        <div class="panel layerpanel">
          <div class="layerbox">
            <div class="layers">
              <div v-for="(l, i) in layers" :key="l[0]" class="layer">
                <span class="tick" :class="{ focus: i === 0 }"><svg v-if="l[2]" viewBox="0 0 56 40"><path d="M9 25L19 22.500 25 29Q31 9 47 4V15.500Q35 21 25.500 36Z" fill="#1463c3" /></svg></span>
                <span class="swatch"><i :style="{ background: l[1] }" /></span>
                <span class="lname">{{ l[0] }}</span>
              </div>
            </div>
            <div class="vbar dither"><b class="btn up" /><b class="btn" /><b class="btn down end" /></div>
          </div>
          <div class="wide"><span class="face">Show Priority Layers Only</span><span class="face dots">...</span></div>
          <div class="layertools">
            <svg viewBox="0 0 34 40" v-html="icons.addLayer" />
            <svg viewBox="0 0 34 40" v-html="icons.layerList" />
            <div class="combo"><span>Contrast</span><b class="btn down" /></div>
            <svg viewBox="0 0 34 40" v-html="icons.contrast" />
          </div>
        </div>
        <div class="panel manager">
          <div class="mhead">
            <span>Design Manager</span>
            <svg viewBox="0 0 30 30" v-html="icons.sortList" />
            <div class="pressed"><svg viewBox="0 0 30 30" v-html="icons.bigChip" /></div>
            <svg viewBox="0 0 30 30" v-html="icons.track" />
          </div>
          <div class="complist">
            <div class="comps"><div v-for="c in components" :key="c">{{ c }}</div></div>
            <div class="vbar dither"><b class="btn up" /><b class="btn mthumb" /><b class="btn down end" /></div>
          </div>
          <div class="pinlabel">Component Pins:</div>
          <div class="pinbox" />
        </div>
      </aside>
    </main>

    <footer>
      <span class="s0" /><span class="s1">Default Mode</span><span class="s2">Normal View</span><span class="s3">Grid: OFF</span><span class="s4">X=-39.088 mm</span><span class="s5">Y=33.562 mm</span>
    </footer>

    <div class="menu file">
      <template v-for="(m, i) in fileMenu" :key="i">
        <div v-if="m.label" class="item" :class="{ on: m.on, off: m.off }">
          <svg class="mi" viewBox="0 0 34 34" v-html="m.icon ? icons[m.icon] : ''" />
          <span>{{ parts(m.label)[0] }}<u>{{ parts(m.label)[1] }}</u>{{ parts(m.label)[2] }}</span>
          <span class="keys">{{ m.keys }}</span>
          <i v-if="m.sub" class="arrow" />
        </div>
        <hr v-else />
      </template>
    </div>
    <div class="menu export">
      <template v-for="(m, i) in exportMenu" :key="i">
        <div v-if="m.label" class="item" :class="{ on: m.on }"><span>{{ parts(m.label)[0] }}<u>{{ parts(m.label)[1] }}</u>{{ parts(m.label)[2] }}</span></div>
        <hr v-else />
      </template>
    </div>
  </div>
</template>

<style>
body { margin: 0; background: #d4d0c8; }
</style>

<style scoped>
* { box-sizing: border-box; }
.window { position: relative; width: 3696px; height: 2116px; overflow: hidden; display: flex; flex-direction: column; background: #d4d0c8; color: #000; font-family: "DejaVu Sans Condensed", "DejaVu Sans", sans-serif; font-stretch: condensed; font-size: 21.33px; white-space: pre; }
.window > * { flex: none; }
u { text-decoration-thickness: 1.5px; text-underline-offset: 3px; }

.title { height: 84px; border-top: 10px solid #1d1d1d; border-bottom: 2px solid #1a1d1f; background: #323031; color: #fff; display: flex; align-items: center; }
.name { width: 3568px; padding-left: 118px; text-align: center; font: bold 28px/38px "Noto Sans", sans-serif; font-stretch: normal; letter-spacing: 0.255px; padding-top: 2px; }
.controls { width: 110px; height: 72px; margin-left: 15px; }

.menubar { height: 37px; display: flex; line-height: 40px; }
.menubar span { padding-left: 12.5px; }
.menubar .open { border: 1.5px solid; border-color: #808080 #fff #fff #808080; padding-left: 11.5px; line-height: 38px; }

.toolbars { height: 139px; border-bottom: 2px solid #808080; }
.toolrow { height: 69px; display: flex; }
.group { display: flex; border-top: 2px solid #fff; border-bottom: 1.5px solid #808080; border-right: 2px solid #808080; box-shadow: inset 2px 0 #fff, inset 4px 0 #d4d0c8, inset 5.5px 0 #fff, inset 7px 0 #808080; }
.tool { flex: none; width: 34px; height: 34px; margin-top: 3px; }
.abc { width: 34px; font: 18px "DejaVu Sans Mono", monospace; letter-spacing: -1.3px; line-height: 42px; }
.sep { flex: none; width: 2px; height: 56px; margin-top: 2px; background: linear-gradient(90deg, #808080 50%, #fff 50%); }

.combo { flex: none; height: 37px; display: flex; background: #fff; border: 2px solid; border-color: #606060 #fff #fff #606060; font-size: 23.4px; }
.combo span { flex: 1; padding-left: 2px; line-height: 35px; }
.group .combo { margin-top: 8px; }
.btn { display: flex; flex: none; align-items: center; justify-content: center; width: 32px; height: 32px; background: #d4d0c8; border: 1.5px solid; border-color: #f4f2ec #404040 #404040 #f4f2ec; box-shadow: inset -1.5px -1.5px #808080; }
.down::after, .up::after, .prev::after, .next::after { content: ''; border: 7.5px solid transparent; }
.down::after { border-top: 8px solid #000; border-bottom: 0; }
.up::after { border-bottom: 8px solid #000; border-top: 0; }
.prev::after { border-right: 8px solid #000; border-left: 0; }
.next::after { border-left: 8px solid #000; border-right: 0; }

main { height: 1833px; display: flex; }
.vbar { flex: none; width: 32px; display: flex; flex-direction: column; background: #fff; }
.end { margin-top: auto; }
.dither { background: repeating-conic-gradient(#fff 0 25%, #d4d0c8 0 50%) 0 0 / 3px 3px; }

.left { width: 384px; padding: 0 7px 0 2px; border-left: 1.5px solid #404040; border-right: 1.5px solid #808080; }
.patterns { height: 1643px; display: flex; background: #000; border-right: 2px solid #fff; border-bottom: 2px solid #fff; overflow: hidden; }
.names { flex: 1; padding: 1119px 0 0 1px; color: #c0c0c0; font-size: 29.3px; letter-spacing: .25px; line-height: 36.05px; overflow: hidden; }
.lthumb { height: 1251px; }
.patname { height: 48px; padding-left: 2px; line-height: 50px; font-size: 23.4px; }
.patview { width: 367px; height: 137px; margin-left: 1px; background: #000; border: 1.5px solid; border-color: #808080 #fff #fff #808080; display: flex; justify-content: center; gap: 19px; padding: 50px 0 0 2px; }
.patview i { width: 44px; height: 34px; background: #ffffa8; }

.work { width: 2844px; }
.upper { height: 1797px; display: flex; }
.board { flex: none; width: 2807px; height: 1796px; background: #000; font-family: Roboto, sans-serif; }
.canvas-v { width: 36px; height: 1797px; border-left: 1px solid #808080; }
.canvas-v .btn { width: 34px; }
.cthumb { margin-top: 868px; }
.hbar { width: 2808px; height: 34px; display: flex; background: #fff; border-top: 1px solid #808080; }
.hbar .btn { height: 33px; }
.hbar .prev { width: 30px; }
.hthumb { margin-left: 1371px; }
.next { margin-left: auto; }

.right { width: 468px; font-size: 23.4px; letter-spacing: .13px; }
.tabs { display: flex; align-items: flex-end; height: 39px; padding-top: 4px; }
.tabs span { height: 33px; padding-left: 5px; line-height: 33px; border: 1.5px solid #fff; border-right: 2px solid #404040; border-bottom: 0; border-radius: 3px 3px 0 0; width: 95px; letter-spacing: 0; }
.tabs span:last-child { width: 123px; }
.tabs .active { width: 87px; height: 35px; padding-left: 7px; }
.panel { width: 458px; border: 1.5px solid #fff; border-right: 2px solid #606060; border-bottom: 2px solid #606060; }
.layerpanel { height: 577px; padding: 9px 0 0 9px; }
.layerbox { width: 425px; height: 427px; margin-left: 3px; display: flex; background: #fff; border: 1.5px solid; border-color: #606060 #fff #fff #606060; overflow: hidden; }
.layers { width: 390px; overflow: hidden; }
.layer { display: flex; width: 381px; height: 41px; border-bottom: 1.5px solid #c0c0c0; border-right: 1.5px solid #c0c0c0; }
.tick { width: 57px; border-right: 1.5px solid #c0c0c0; }
.tick svg { display: block; width: 56px; height: 40px; }
.focus { border: 3px solid #0a246a; }
.focus svg { margin: -3px 0 0 -3px; }
.swatch { width: 55px; padding: 1.5px; border-right: 1.5px solid #c0c0c0; }
.swatch i { display: block; height: 37px; }
.lname { padding-left: 4px; line-height: 40px; }
.wide { display: flex; margin-top: 1px; }
.face { width: 377px; height: 50px; line-height: 49px; text-align: center; padding-right: 10px; border: 1.5px solid; border-color: #fff #606060 #606060 #fff; }
.dots { width: 54px; padding: 0; }
.layertools { display: flex; height: 40px; margin: 33px 0 0 10px; }
.layertools > svg { width: 34px; height: 40px; margin: -5px 34px 0 8px; }
.layertools > svg + svg { margin: -5px 40px 0 0; }
.layertools .combo { width: 206px; margin-left: 11px; }
.layertools > .combo + svg { margin: 7px 0 0 17px; }

.manager { height: 1215px; padding: 9px 0 0 15px; margin-top: 0; }
.mhead { display: flex; height: 61px; }
.mhead span { width: 263px; line-height: 57px; letter-spacing: 0; }
.mhead > svg { width: 30px; height: 30px; margin: 17px 15px 0 -2px; }
.mhead > svg:last-child { margin: 14px 0 0 15px; }
.pressed { width: 60px; height: 59px; padding: 17px 0 0 17px; border: 1.5px solid; border-color: #808080 #fff #fff #808080; background: repeating-conic-gradient(#fff 0 25%, #d4d0c8 0 50%) 0 0 / 3px 3px; }
.pressed svg { width: 30px; height: 30px; display: block; }
.complist { width: 426px; height: 546px; display: flex; background: #fff; border: 2px solid; border-color: #606060 #fff #fff #606060; overflow: hidden; }
.comps { width: 390px; padding: .5px 0 0 1px; line-height: 29px; overflow: hidden; }
.mthumb { height: 221px; }
.pinlabel { height: 44px; line-height: 46px; letter-spacing: 0; }
.pinbox { width: 426px; height: 538px; background: #fff; border: 2px solid; border-color: #606060 #fff #fff #606060; }

footer { height: 23px; display: flex; line-height: 23px; }
footer span { border-top: 1.5px solid #808080; border-left: 1.5px solid #808080; padding-left: 4px; }
.s0 { width: 2477px; } .s1 { width: 441px; } .s2 { width: 179px; } .s3 { width: 200px; } .s4 { width: 200px; } .s5 { width: 199px; }

.menu { position: absolute; display: flex; flex-direction: column; background: #d4d0c8; border: 1.5px solid; border-color: #fff #404040 #404040 #fff; box-shadow: 5px 5px 14px rgba(0, 0, 0, .4); padding: 1.5px; }
.file { left: 0; top: 121px; width: 754px; height: 1276px; letter-spacing: .06px; }
.export { left: 750px; top: 627px; width: 658px; height: 1142px; letter-spacing: .28px; }
.item { flex: none; height: 70px; display: flex; line-height: 72px; padding-right: 14px; }
.file .item { padding-right: 0; }
.export .item { padding-left: 38px; }
.mi { width: 34px; height: 34px; flex: none; margin: 4px 5px 0 0; }
.keys { width: 200px; text-align: right; margin-left: auto; padding-right: 15px; }
.arrow { width: 5px; height: 10px; margin: 30px 2px 0 -7px; background: currentColor; clip-path: polygon(0 0, 100% 50%, 0 100%); }
.on { background: #0a246a; color: #fff; }
.off { color: #868686; text-shadow: 1px 1px #fff; }
hr { flex: none; width: 100%; height: 2.5px; margin: 4px 0 9.5px; border: 0; background: linear-gradient(#808080 50%, #fff 50%); }
</style>
